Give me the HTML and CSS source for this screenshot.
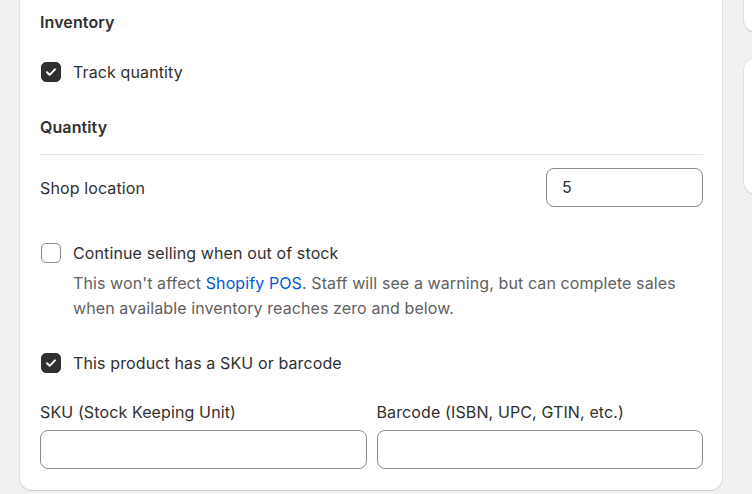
FILE: index.html
```html
<!DOCTYPE html>
<html>
<head>
<meta charset="utf-8">
<link rel="stylesheet" href="styles.css">
</head>
<body>
<div class="page">
  <section class="card">
    <h2 class="heading">Inventory</h2>
    <label class="check-row first">
      <span class="box checked"><svg viewBox="0 0 20 20" width="20" height="20"><path d="M6 10.3l2.6 2.6L14 7.4" fill="none" stroke="#fff" stroke-width="2" stroke-linecap="round" stroke-linejoin="round"/></svg></span>
      <span class="label">Track quantity</span>
    </label>
    <h2 class="heading qty">Quantity</h2>
    <div class="divider"></div>
    <div class="loc-row">
      <span class="label">Shop location</span>
      <div class="input small">5</div>
    </div>
    <label class="check-row cont">
      <span class="box"></span>
      <span class="label">Continue selling when out of stock</span>
    </label>
    <p class="help">This won't affect <a class="link">Shopify POS</a>. Staff will see a warning, but can complete sales when available inventory reaches zero and below.</p>
    <label class="check-row sku">
      <span class="box checked"><svg viewBox="0 0 20 20" width="20" height="20"><path d="M6 10.3l2.6 2.6L14 7.4" fill="none" stroke="#fff" stroke-width="2" stroke-linecap="round" stroke-linejoin="round"/></svg></span>
      <span class="label">This product has a SKU or barcode</span>
    </label>
    <div class="fields">
      <div class="field">
        <span class="label">SKU (Stock Keeping Unit)</span>
        <div class="input"></div>
      </div>
      <div class="field">
        <span class="label">Barcode (ISBN, UPC, GTIN, etc.)</span>
        <div class="input"></div>
      </div>
    </div>
  </section>
  <aside class="side">
    <div class="side-card top"></div>
    <div class="side-card mid"></div>
  </aside>
</div>
</body>
</html>
```
FILE: styles.css
```css
html, body {
  margin: 0;
  padding: 0;
  background: #f1f1f1;
  font-family: Inter, "Noto Sans", sans-serif;
  color: #303030;
  overflow: hidden;
}
.page {
  display: flex;
  align-items: flex-start;
  gap: 22px;
  padding-left: 20px;
  width: 752px;
  height: 494px;
  box-sizing: border-box;
  overflow: hidden;
}
.card {
  width: 702px;
  flex: none;
  box-sizing: border-box;
  background: #fff;
  border-radius: 0 0 12px 12px;
  padding: 12px 19px 21px 20px;
  box-shadow: 0 0 0 1px rgba(0,0,0,0.05), 0 1px 1px rgba(0,0,0,0.12);
}
.heading {
  margin: 0;
  font-size: 16px;
  line-height: 20px;
  font-weight: 600;
  letter-spacing: 0.1px;
}
.label {
  font-size: 16px;
  line-height: 20px;
  letter-spacing: 0.12px;
}
.check-row {
  display: flex;
  align-items: center;
  gap: 12px;
}
.check-row.first { margin-top: 30px; }
.heading.qty { margin-top: 35px; }
.divider {
  height: 1px;
  background: #e3e3e3;
  margin-top: 17px;
}
.box {
  width: 20px;
  height: 20px;
  flex: none;
  box-sizing: border-box;
  border-radius: 5px;
  border: 1px solid #8a8a8a;
  background: #fff;
  display: block;
  margin-left: 1px;
}
.box.checked {
  background: #303030;
  border-color: #303030;
}
.box svg { display: block; margin: -1px; }
.loc-row {
  display: flex;
  justify-content: space-between;
  align-items: center;
  margin-top: 13px;
}
.input {
  height: 39px;
  box-sizing: border-box;
  border: 1px solid #8a8a8a;
  border-radius: 8px;
  background: #fff;
  font-size: 16px;
  line-height: 37px;
  padding: 0 15px;
}
.input.small { width: 157px; }
.check-row.cont { margin-top: 36px; }
.help {
  margin: 8px 0 0 33px;
  font-size: 16px;
  line-height: 25px;
  letter-spacing: 0.1px;
  color: #616161;
}
.link { color: #005bd3; text-decoration: none; }
.check-row.sku { margin-top: 32px; }
.fields {
  display: grid;
  grid-template-columns: 1fr 1fr;
  gap: 10px;
  margin-top: 29px;
}
.field {
  display: flex;
  flex-direction: column;
  gap: 8px;
}
.side {
  display: flex;
  flex-direction: column;
  gap: 26px;
  flex: none;
  width: 200px;
}
.side-card {
  background: #fff;
  border-radius: 12px;
  box-shadow: 0 0 0 1px rgba(0,0,0,0.05), 0 1px 1px rgba(0,0,0,0.12);
}
.side-card.top { height: 32px; border-radius: 0 0 12px 12px; }
.side-card.mid { height: 136px; }
```
